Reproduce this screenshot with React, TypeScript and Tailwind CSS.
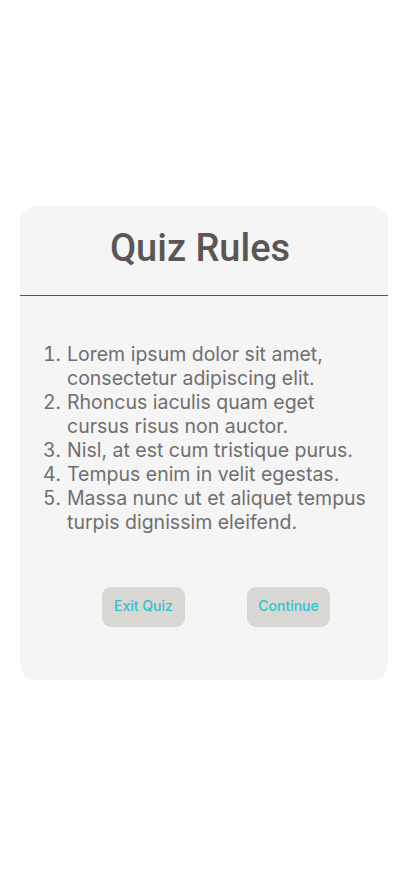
const rules = [
  "Lorem ipsum dolor sit amet, consectetur adipiscing elit.",
  "Rhoncus iaculis quam eget cursus risus non auctor.",
  "Nisl, at est cum tristique purus.",
  "Tempus enim in velit egestas.",
  "Massa nunc ut et aliquet tempus turpis dignissim eleifend.",
];

export default function App() {
  return (
    <div className="min-h-[886px] w-full bg-white pt-[206px]">
      <div className="ml-5 h-[474px] w-[368px] rounded-[16px] bg-[#f5f5f5]">
        <h1 className="pt-[20px] pr-[8px] text-center font-['Roboto',sans-serif] text-[38px] font-medium leading-[44px] text-[#5a5656]">
          Quiz Rules
        </h1>
        <div className="mt-[25px] h-px bg-[#555555]" />
        <ol className="mt-[46px] list-decimal pl-[46px] pr-[10px] font-['Inter',sans-serif] text-[19.5px] leading-[24px] text-[#6f6f6f] marker:text-[#6f6f6f]">
          {rules.map((r) => (
            <li key={r} className="pl-[1px]">
              {r}
            </li>
          ))}
        </ol>
        <div className="mt-[53px] flex justify-center gap-[62px] pl-[24px]">
          <button className="h-[40px] w-[83px] rounded-[9px] bg-[#d9d7d4] pb-[3px] font-['Inter',sans-serif] text-[14px] font-medium text-[#2ac4d2]">
            Exit Quiz
          </button>
          <button className="h-[40px] w-[83px] rounded-[9px] bg-[#d9d7d4] pb-[3px] font-['Inter',sans-serif] text-[14px] font-medium text-[#2ac4d2]">
            Continue
          </button>
        </div>
      </div>
    </div>
  );
}
